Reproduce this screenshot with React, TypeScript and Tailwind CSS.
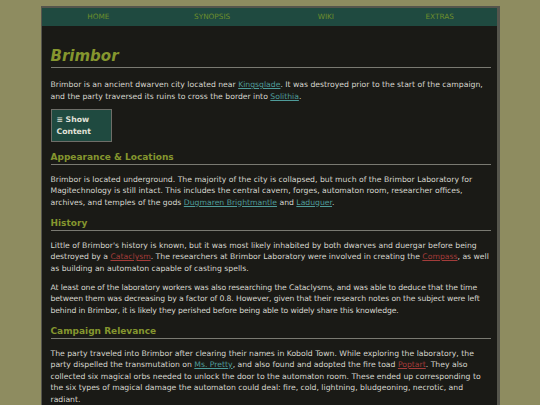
import type { ReactNode } from "react";

const navItems = ["Home", "Synopsis", "Wiki", "Extras"];

function Link({ children, missing }: { children: ReactNode; missing?: boolean }) {
  return (
    <a
      href="#"
      className={
        missing
          ? "text-[#a33c3a] underline underline-offset-[1px]"
          : "text-[#4f9c9a] underline underline-offset-[1px]"
      }
    >
      {children}
    </a>
  );
}

function Heading({ children }: { children: ReactNode }) {
  return (
    <h2 className="mt-[9px] mr-[2px] border-b border-[#7a7a72] text-[9px] font-bold leading-[13px] text-[#85962e]">
      {children}
    </h2>
  );
}

export default function App() {
  return (
    <div
      className="min-h-[405px] bg-[#8e8c60] pt-[6px]"
      style={{ fontFamily: '"DejaVu Sans", Verdana, sans-serif' }}
    >
      <div className="mx-auto h-[399px] w-[459px] overflow-hidden border-t-2 border-l border-r-[3px] border-[#55554c] bg-[#1a1a16]">
        <nav className="grid h-[18px] grid-cols-4 bg-[#1f4a40] text-[7.3px] uppercase leading-[18px] text-[#6d8e2c]">
          {navItems.map((n) => (
            <a key={n} href="#" className="text-center">
              {n}
            </a>
          ))}
        </nav>

        <div className="pl-[9px] pr-[4px] text-[7.7px] leading-[11.5px] text-[#d6d6ce]">
          <h1 className="mt-[20px] mr-[2px] border-b border-[#7a7a72] pb-[1px] text-[15px] font-bold italic leading-[20px] text-[#85962e]">
            Brimbor
          </h1>

          <p className="mt-[11px]">
            Brimbor is an ancient dwarven city located near <Link>Kingsglade</Link>. It was destroyed
            prior to the start of the campaign, and the party traversed its ruins to cross the border
            into <Link>Solithia</Link>.
          </p>

          <button className="mt-[7px] flex h-[33px] w-[61px] flex-col justify-center border border-[#6e6e68] bg-[#1f4a40] px-[5px] text-left font-bold leading-[11.5px] text-[#e2e2da]">
            <span>≡ Show</span>
            <span>Content</span>
          </button>

          <div className="mt-[1px]">
            <Heading>Appearance &amp; Locations</Heading>
          </div>
          <p className="mt-[8.5px]">
            Brimbor is located underground. The majority of the city is collapsed, but much of the
            Brimbor Laboratory for Magitechnology is still intact. This includes the central cavern,
            forges, automaton room, researcher offices, archives, and temples of the gods{" "}
            <Link>Dugmaren Brightmantle</Link> and <Link>Laduguer</Link>.
          </p>

          <Heading>History</Heading>
          <p className="mt-[8.5px]">
            Little of Brimbor's history is known, but it was most likely inhabited by both dwarves and
            duergar before being destroyed by a <Link missing>Cataclysm</Link>. The researchers at
            Brimbor Laboratory were involved in creating the <Link missing>Compass</Link>, as well as
            building an automaton capable of casting spells.
          </p>
          <p className="mt-[7.5px] tracking-[-0.12px]">
            At least one of the laboratory workers was also researching the Cataclysms, and was able to
            deduce that the time between them was decreasing by a factor of 0.8. However, given that
            their research notes on the subject were left behind in Brimbor, it is likely they perished
            before being able to widely share this knowledge.
          </p>

          <Heading>Campaign Relevance</Heading>
          <p className="mt-[8.5px]">
            The party traveled into Brimbor after clearing their names in Kobold Town. While exploring
            the laboratory, the party dispelled the transmutation on <Link>Ms. Pretty</Link>, and also
            found and adopted the fire toad <Link missing>Poptart</Link>. They also collected six
            magical orbs needed to unlock the door to the automaton room. These ended up corresponding
            to the six types of magical damage the automaton could deal: fire, cold, lightning,
            bludgeoning, necrotic, and radiant.
          </p>
        </div>
      </div>
    </div>
  );
}
